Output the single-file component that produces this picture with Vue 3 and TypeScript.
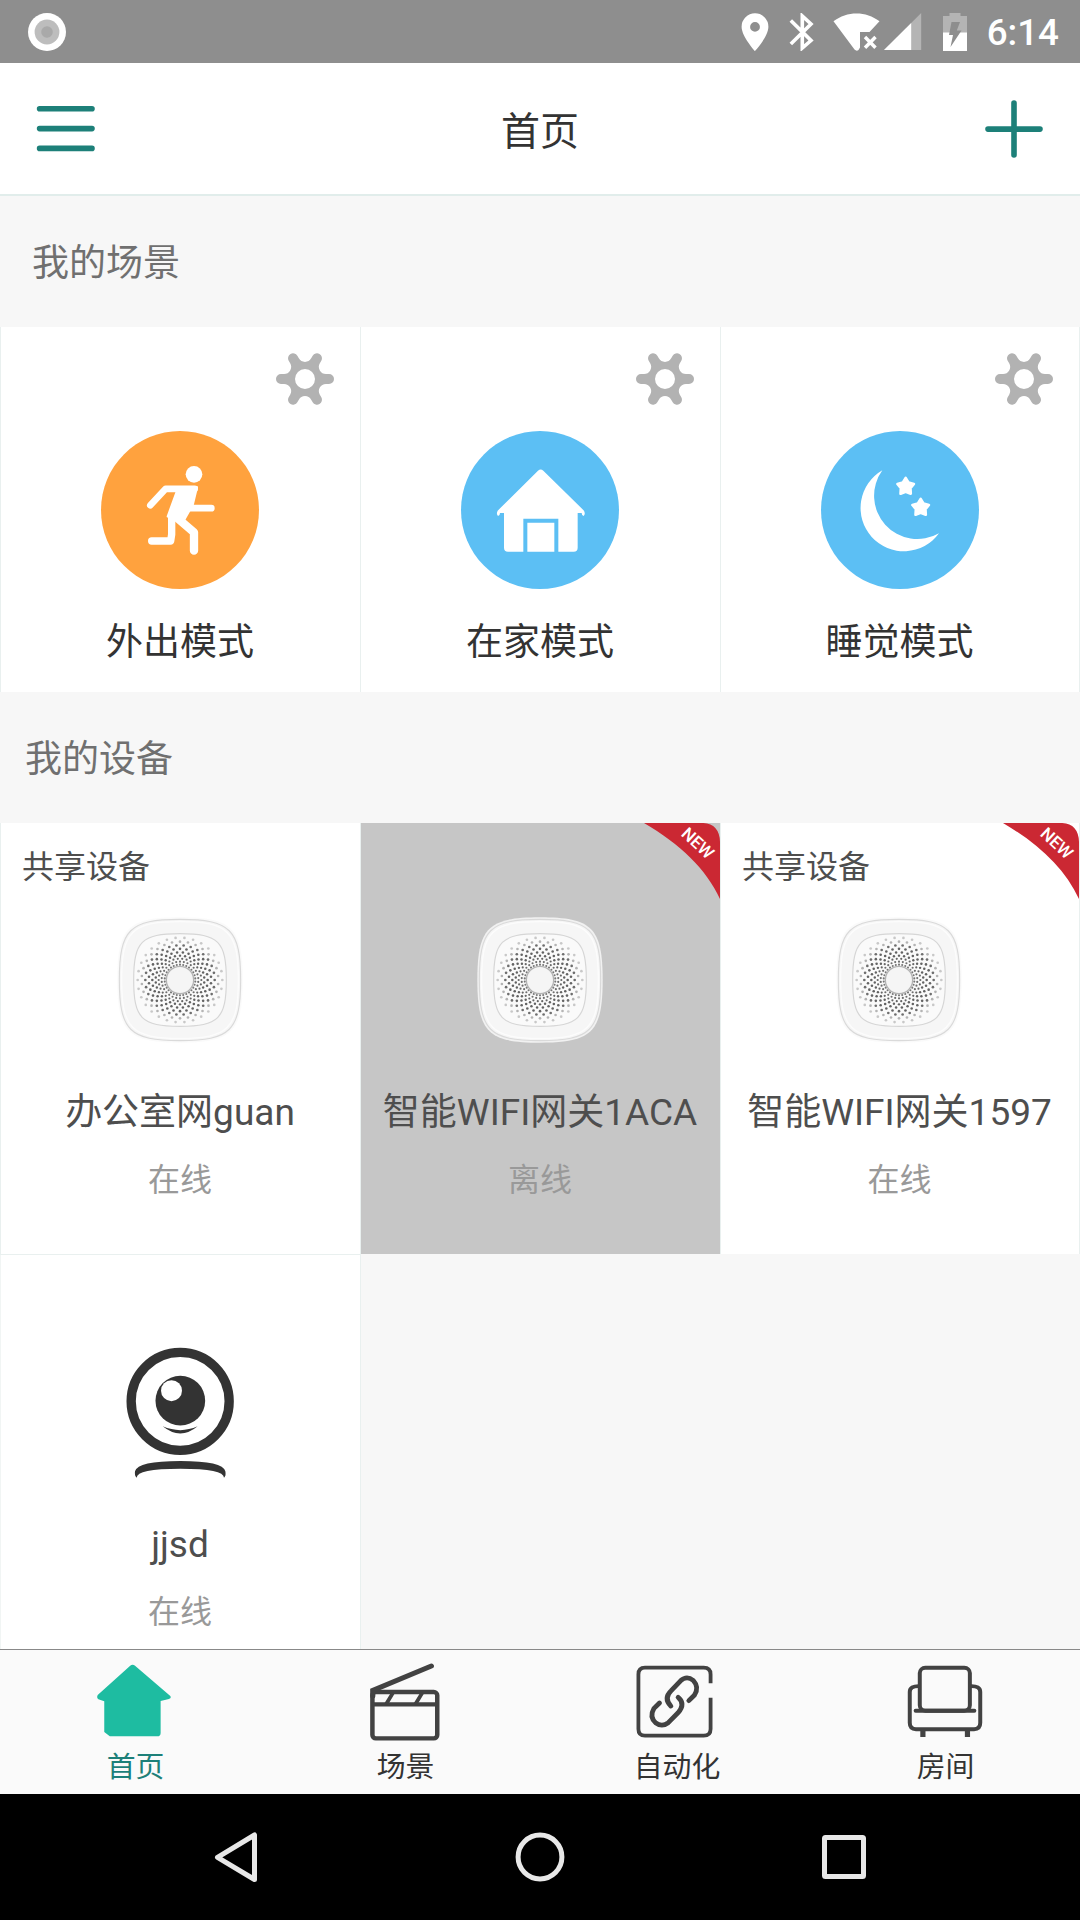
<script setup lang="ts">
interface Scene {
  name: string
  color: string
  icon: 'run' | 'house' | 'moon'
}
interface Device {
  name: string
  status: string
  kind: 'gateway' | 'camera'
  shared?: boolean
  offline?: boolean
  fresh?: boolean
}
interface Dot {
  x: number
  y: number
  r: number
  c: string
}

const scenes: Scene[] = [
  { name: '外出模式', color: '#ffa23e', icon: 'run' },
  { name: '在家模式', color: '#5cbff4', icon: 'house' },
  { name: '睡觉模式', color: '#5cbff4', icon: 'moon' },
]

const devices: Device[] = [
  { name: '办公室网guan', status: '在线', kind: 'gateway', shared: true },
  { name: '智能WIFI网关1ACA', status: '离线', kind: 'gateway', offline: true, fresh: true },
  { name: '智能WIFI网关1597', status: '在线', kind: 'gateway', shared: true, fresh: true },
  { name: 'jjsd', status: '在线', kind: 'camera' },
]

const tabs = [
  { id: 'home', label: '首页' },
  { id: 'scene', label: '场景' },
  { id: 'auto', label: '自动化' },
  { id: 'room', label: '房间' },
]

// Six-tooth gear outline: rounded tooth tips joined by concave fillets.
function gear(): string {
  const at = (deg: number, x: number, y: number) => {
    const t = (deg * Math.PI) / 180
    return `${(x * Math.cos(t) - y * Math.sin(t)).toFixed(2)} ${(x * Math.sin(t) + y * Math.cos(t)).toFixed(2)}`
  }
  let d = `M${at(0, 21, -5)}`
  for (let i = 0; i < 6; i++) {
    const a = i * 60
    d += `L${at(a, 24, -5)}A5 5 0 0 1 ${at(a, 24, 5)}L${at(a, 21, 5)}A7.12 7.12 0 0 0 ${at(a + 60, 21, -5)}`
  }
  return d + 'ZM10 0A10 10 0 1 0 -10 0A10 10 0 1 0 10 0Z'
}
const gearPath = gear()

// Perforated speaker grille: concentric rings, alternately offset by half a step.
const rings = [
  { r: 46, n: 30, o: 0, s: 3.2, c: '#777' },
  { r: 55, n: 30, o: 0, s: 3.2, c: '#6e6e6e' },
  { r: 64, n: 30, o: 0.5, s: 3.3, c: '#666' },
  { r: 73, n: 30, o: 0, s: 3.6, c: '#626262' },
  { r: 83, n: 30, o: 0.5, s: 3.8, c: '#626262' },
  { r: 93.5, n: 30, o: 0, s: 3.9, c: '#646464' },
  { r: 104, n: 30, o: 0.5, s: 4, c: '#6e6e6e' },
  { r: 115, n: 30, o: 0, s: 4, c: '#b4b4b4' },
  { r: 127, n: 30, o: 0.5, s: 4, c: '#c8c8c8' },
]
const dots: Dot[] = rings.flatMap((g) =>
  Array.from({ length: g.n }, (_, i) => {
    const t = ((i + g.o) / g.n) * Math.PI * 2 - Math.PI / 2
    return { x: g.r * Math.cos(t), y: g.r * Math.sin(t), r: g.s, c: g.c }
  }),
)

function squircle(a: number, k = 0.83): string {
  const c = a * k
  return `M${-a} 0C${-a} ${-c} ${-c} ${-a} 0 ${-a}S${a} ${-c} ${a} 0S${c} ${a} 0 ${a}S${-a} ${c} ${-a} 0Z`
}

function star(cx: number, cy: number): string {
  return Array.from({ length: 10 }, (_, i) => {
    const r = i % 2 ? 15 : 26
    const t = (i * Math.PI) / 5 - Math.PI / 2
    return `${(cx + r * Math.cos(t)).toFixed(1)},${(cy + r * Math.sin(t)).toFixed(1)}`
  }).join(' ')
}
</script>

<template>
  <div class="phone">
    <div class="status-bar">
      <svg class="rec" width="40" height="40" viewBox="-20 -20 40 40">
        <circle r="19" fill="#fff" /><circle r="12.4" fill="#bdbdbd" /><circle r="5.8" fill="#a9a9a9" />
      </svg>
      <div class="status-right">
        <svg class="pin" width="28" height="38" viewBox="0 0 28 38">
          <path fill="#fff" fill-rule="evenodd" d="M14 0.3A13.4 13.4 0 0 0 0.6 13.7C0.6 23.5 14 38 14 38S27.400 23.500 27.400 13.700A13.400 13.400 0 0 0 14 0.300ZM14 9A4.900 4.900 0 1 1 14 18.800A4.900 4.900 0 1 1 14 9Z" />
        </svg>
        <svg class="bt" width="26" height="38" viewBox="0 0 26 38">
          <path fill="none" stroke="#fff" stroke-width="3.6" d="M1.800 7.500L22 27.500L13.300 35V3L22 11L1.800 31" />
        </svg>
        <svg class="wifi" width="47" height="38" viewBox="0 0 47 38">
          <path fill="#fff" d="M0.500 8.200C14-2.200 33-2.200 46.500 8.200L36.500 19H27V34.500L25.500 37Q23.500 38.500 21.500 36.500Z" />
          <path fill="none" stroke="#fff" stroke-width="3.400" d="M32 24L42.500 34.800M42.500 24L32 34.800" />
        </svg>
        <svg class="signal" width="38" height="38" viewBox="0 0 38 38">
          <path fill="#b4b4b4" d="M37.200 0V37H0Z" /><path fill="#fff" d="M27.200 10V37H0Z" />
        </svg>
        <svg class="battery" width="24" height="38" viewBox="0 0 24 38">
          <path fill="#b4b4b4" d="M6.500 0H17.500V3H24V20H0V3H6.500Z" />
          <path fill="#fff" d="M0 19.500H24V38H0Z" />
          <path fill="#8e8e8e" d="M8.500 9H17L13.800 17.500H18.500L7.500 34L10 22H6Z" />
        </svg>
        <span class="clock">6:14</span>
      </div>
    </div>

    <header class="header">
      <svg width="60" height="60" viewBox="0 0 60 60">
        <path stroke="#1d8079" stroke-width="5.600" stroke-linecap="round" d="M3.600 9.800H56M3.600 29.600H56M3.600 49.400H56" />
      </svg>
      <h1>首页</h1>
      <svg width="60" height="60" viewBox="0 0 60 60">
        <path stroke="#1d8079" stroke-width="5.600" stroke-linecap="round" d="M4 30.100H56M30 4V56" />
      </svg>
    </header>

    <main class="content">
      <h2 class="section scenes-title">我的场景</h2>
      <div class="grid">
        <div v-for="s in scenes" :key="s.name" class="cell scene">
          <svg class="gear" width="60" height="60" viewBox="-30 -30 60 60">
            <path :d="gearPath" fill="#b2b2b2" fill-rule="evenodd" />
          </svg>
          <svg class="scene-icon" width="158" height="158" viewBox="303 332 474 474">
            <circle cx="540" cy="569" r="237" :fill="s.color" />
            <g v-if="s.icon === 'run'" fill="#fff" stroke="#fff" stroke-linecap="round" stroke-linejoin="round" transform="translate(0 -360)">
              <circle cx="582" cy="822" r="25" stroke="none" />
              <path fill="none" stroke-width="20" d="M451 915L497 865.500H584M570 923.500H634" />
              <path stroke-width="8" d="M534 866L590 861L577 915L566 933L552 958H530L504 948Z" />
              <path fill="none" stroke-width="22" d="M515 950V1002L512 1022H455" />
              <path fill="none" stroke-width="25" d="M533 954L582 996V1051" />
            </g>
            <g v-else-if="s.icon === 'house'">
              <path fill="#fff" d="M534 451Q542 444 550 451L672 571Q677 582 671 587Q665 586 665 578H653V682Q653 694 641 694H444Q432 694 432 682V578H420Q420 586 414 587Q408 582 413 571Z" />
              <path fill="none" :stroke="s.color" stroke-width="12" d="M496 696V601H589V696" />
            </g>
            <g v-else fill="#fff">
              <path d="M487 450A130 130 0 1 0 657 639A130 130 0 0 1 487 450Z" />
              <g stroke="#fff" stroke-width="8" stroke-linejoin="round">
                <polygon :points="star(557, 499)" /><polygon :points="star(602, 562)" />
              </g>
            </g>
          </svg>
          <span class="scene-name">{{ s.name }}</span>
        </div>
      </div>

      <h2 class="section devices-title">我的设备</h2>
      <div class="grid">
        <div v-for="d in devices" :key="d.name" class="cell device" :class="[d.kind, { offline: d.offline }]">
          <div class="shared">{{ d.shared ? '共享设备' : '' }}</div>
          <svg v-if="d.fresh" class="badge" width="76" height="76" viewBox="853 69 227 227">
            <path fill="#cb2833" d="M853 69H1030Q1078 72 1080 125V296C1038 205 960 132 853 69Z" />
            <text x="1014" y="147" text-anchor="middle" transform="rotate(43 1014 129)">NEW</text>
          </svg>
          <svg v-if="d.kind === 'gateway'" class="device-icon" width="128" height="128" viewBox="-192 -192 384 384">
            <path :d="squircle(188)" fill="#f1f1f1" :opacity="d.offline ? 1 : 0.35" />
            <path :d="squircle(182)" fill="#f6f6f6" stroke="#dadada" stroke-width="3.500" />
            <path :d="squircle(175)" fill="none" stroke="#fff" stroke-width="4" opacity="0.700" />
            <path :d="squircle(139)" fill="#fafafa" stroke="#d6d6d6" stroke-width="3.500" />
            <circle v-for="(p, i) in dots" :key="i" :cx="p.x" :cy="p.y" :r="p.r" :fill="p.c" />
            <circle r="41" fill="#f5f5f5" stroke="#b4b4b4" stroke-width="4" />
          </svg>
          <svg v-else class="device-icon" width="128" height="136" viewBox="349 310 384 408">
            <circle cx="541.500" cy="482" r="147" fill="none" stroke="#333" stroke-width="28" />
            <circle cx="542" cy="480" r="74.500" fill="#333" />
            <circle cx="515.500" cy="450" r="31.500" fill="#fff" />
            <path fill="#333" d="M489 557Q542 580 594 557Q542 600 489 557Z" />
            <path fill="#333" d="M411 711Q404 706 406 692Q414 661 542 661T677 692Q680 706 673 711Q673 684 542 684T411 711Z" />
          </svg>
          <div class="device-name">{{ d.name }}</div>
          <div class="device-status">{{ d.status }}</div>
        </div>
      </div>
    </main>

    <nav class="tabs">
      <div v-for="t in tabs" :key="t.id" class="tab" :class="[t.id, { active: t.id === 'home' }]">
        <div class="tab-icon">
          <svg v-if="t.id === 'home'" width="74" height="78" viewBox="283 98 214 232" preserveAspectRatio="none">
            <path fill="#1ebca1" d="M379 106Q386 100 393 106L495 196Q499 203 491 205L467 211V306Q467 316 457 316H320L304 303V212L287 206Q281 202 285 193Z" />
          </svg>
          <svg v-else-if="t.id === 'scene'" width="70" height="78" viewBox="1077 97 203 234" preserveAspectRatio="none" fill="none" stroke="#424242">
            <rect x="1084" y="184" width="188" height="139" rx="10" stroke-width="13" />
            <path stroke-width="13" d="M1084 221H1272" />
            <path stroke-width="11" d="M1144 186L1124 220M1229 186L1209 220" />
            <path stroke-width="15" stroke-linecap="round" d="M1255 106L1085 179V196" />
          </svg>
          <svg v-else-if="t.id === 'auto'" width="77" height="78" viewBox="281 98 223 232" preserveAspectRatio="none" fill="none" stroke="#424242">
            <path stroke-width="11" d="M497 158V132Q497 112 477 112H307Q288 112 288 132V294Q288 314 307 314H477Q497 314 497 294V201" />
            <g stroke-width="14" stroke-linecap="round">
              <path d="M382 226Q360 203 383 180L410 151Q428 134 447 150Q465 170 450 194L434 210" />
              <path d="M403 200Q425 220 403 246L374 276Q356 290 338 276Q319 258 333 233L349 217" />
            </g>
          </svg>
          <svg v-else width="76" height="78" viewBox="1064 98 220 232" preserveAspectRatio="none" fill="none" stroke="#424242" stroke-width="11.500">
            <path d="M1100 167Q1072 166 1072 184V276Q1072 295 1090 295H1258Q1276 295 1276 276V184Q1276 166 1248 167" />
            <rect x="1101" y="112" width="145" height="128" rx="16" />
            <path stroke-linecap="round" d="M1089 240H1259" />
            <path stroke-width="15" d="M1110 298V318M1239 298V318" />
          </svg>
        </div>
        <span>{{ t.label }}</span>
      </div>
    </nav>

    <div class="nav-bar">
      <svg width="50" height="56" viewBox="0 0 50 56">
        <path fill="none" stroke="#e8e8e8" stroke-width="5" stroke-linejoin="round" d="M43.500 6V50.500L6.500 28.300Z" />
      </svg>
      <svg width="56" height="56" viewBox="0 0 56 56">
        <circle cx="28" cy="28" r="21.900" fill="none" stroke="#e8e8e8" stroke-width="5" />
      </svg>
      <svg width="50" height="56" viewBox="0 0 50 56">
        <rect x="5.500" y="8.600" width="39" height="39" rx="1" fill="none" stroke="#e8e8e8" stroke-width="5" />
      </svg>
    </div>
  </div>
</template>

<style>
body {
  margin: 0;
}
</style>

<style scoped>
.phone {
  width: 1080px;
  height: 1920px;
  display: flex;
  flex-direction: column;
  overflow: hidden;
  background: #f7f7f7;
  font-family: Roboto, 'Noto Sans CJK SC', sans-serif;
}
svg {
  display: block;
  flex: none;
}
h1,
h2 {
  margin: 0;
  font-weight: 400;
}
.status-bar {
  flex: none;
  height: 63px;
  display: flex;
  align-items: center;
  justify-content: space-between;
  padding: 0 21px 0 27px;
  box-sizing: border-box;
  background: #8e8e8e;
}
.status-right {
  display: flex;
  align-items: center;
}
.bt {
  margin-left: 20px;
}
.wifi {
  margin-left: 18px;
}
.signal {
  margin-left: 4px;
}
.battery {
  margin-left: 21px;
}
.clock {
  margin-left: 20px;
  font-size: 36.75px;
  font-weight: 500;
  line-height: 63px;
  color: #fff;
  padding-top: 2px;
}
.header {
  flex: none;
  height: 133px;
  box-sizing: border-box;
  border-bottom: 2px solid #e1edeb;
  padding: 0 36px;
  display: flex;
  align-items: center;
  justify-content: space-between;
  background: #fff;
}
.header h1 {
  padding-top: 6px;
  font-size: 39px;
  line-height: 60px;
  color: #333;
}
.content {
  flex: 1;
  min-height: 0;
  overflow: hidden;
}
.section {
  height: 131px;
  box-sizing: border-box;
  font-size: 37px;
  line-height: 136px;
  color: #707070;
}
.scenes-title {
  padding-left: 32px;
}
.devices-title {
  padding-left: 25px;
}
.grid {
  display: grid;
  grid-template-columns: repeat(3, 360px);
}
.cell {
  position: relative;
  box-sizing: border-box;
  display: flex;
  flex-direction: column;
  align-items: center;
  background: #fff;
  box-shadow: inset 1px 0 #e9f0ef;
}
.cell:nth-child(3n) {
  border-right: 1px solid #e9f0ef;
}
.scene {
  height: 365px;
}
.gear {
  align-self: flex-end;
  margin: 22px 25px 0 0;
}
.scene-icon {
  margin-top: 22px;
}
.scene-name {
  margin-top: 24px;
  font-size: 37px;
  line-height: 60px;
  color: #333;
}
.device {
  height: 431px;
}
.device:nth-child(n + 4) {
  border-top: 1px solid #e9f0ef;
  box-shadow:
    inset 1px 0 #f1f5f4,
    1px 0 #e9f0ef;
}
.offline {
  background: #c6c6c6;
}
.badge {
  position: absolute;
  top: 0;
  right: 0;
}
.badge text {
  font-family: Roboto, sans-serif;
  font-size: 51px;
  font-weight: 500;
  fill: #fff;
}
.shared {
  align-self: flex-start;
  height: 50px;
  margin: 19px 0 0 22px;
  font-size: 32px;
  line-height: 50px;
  color: #4e4e4e;
}
.device-icon {
  height: 136px;
  margin-top: 20px;
}
.device:nth-child(3) .device-icon {
  margin-right: 1px;
}
.device-name {
  margin-top: 35px;
  font-size: 37px;
  line-height: 60px;
  white-space: nowrap;
  color: #4e4e4e;
}
.device-status {
  margin-top: 12px;
  font-size: 32px;
  line-height: 50px;
  color: #999;
}
.tabs {
  flex: none;
  height: 145px;
  box-sizing: border-box;
  border-top: 1px solid #888;
  display: flex;
  background: #fafafa;
}
.tab {
  flex: 1;
  display: flex;
  flex-direction: column;
  align-items: center;
  font-size: 28.875px;
  line-height: 40px;
  color: #333;
}
.tab-icon {
  height: 78px;
  margin: 13px 2px 6px 0;
}
.tab.scene .tab-icon,
.tab.room .tab-icon {
  margin-right: 0;
}
.tab span {
  padding-left: 1px;
}
.tab.auto span {
  padding-left: 4px;
}
.tab.active {
  color: #1d8079;
}
.nav-bar {
  flex: none;
  height: 126px;
  box-sizing: border-box;
  padding: 0 211px;
  display: flex;
  align-items: center;
  justify-content: space-between;
  background: #000;
}
</style>
